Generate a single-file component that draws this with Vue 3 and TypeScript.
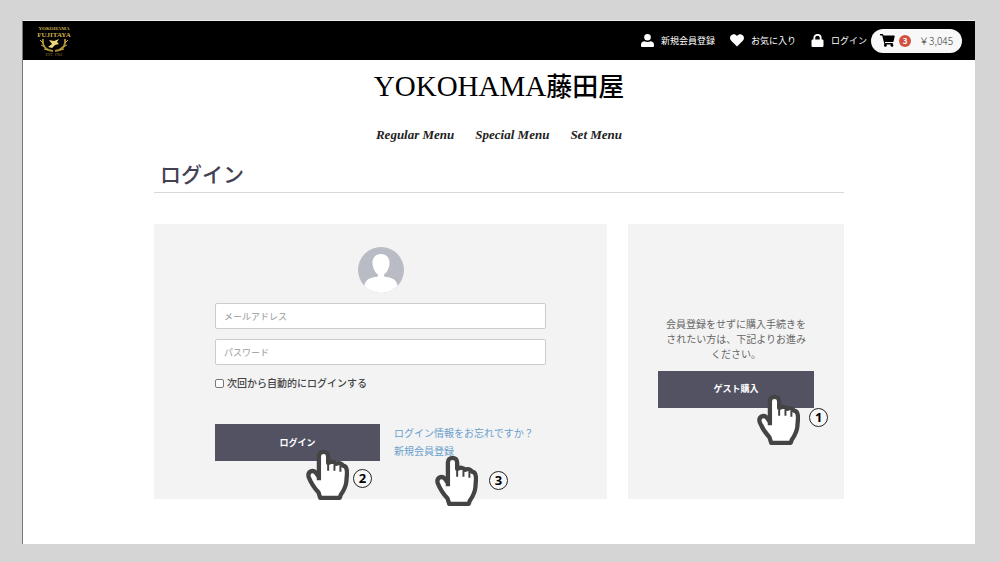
<script setup lang="ts">
import { defineComponent, h, ref } from 'vue'

const email = ref('')
const password = ref('')
const remember = ref(false)

const menus: string[] = ['Regular Menu', 'Special Menu', 'Set Menu']

const handPath =
  'M39 94V21C39 4 67 4 67 21V42C76 35 87 38 91 44C99 40 108 43 112 50C121 50 124 60 124 72L122 98C120 117 113 126 105 138L102 147H43L38 131C22 114 15 102 8 84C4 67 20 61 30 71L39 84'

const StepPointer = defineComponent({
  props: { step: { type: Number, required: true } },
  setup(props) {
    return () =>
      h('span', { class: 'pointer', 'aria-hidden': 'true' }, [
        h('svg', { viewBox: '0 0 130 156', class: 'hand' }, [
          h('path', { d: handPath, fill: '#fff', stroke: '#444', 'stroke-width': 13, 'stroke-linejoin': 'round' }),
          h('path', { d: 'M67 42V65M86 46V65M104 50V68', fill: 'none', stroke: '#444', 'stroke-width': 6 }),
        ]),
        h('span', { class: 'step' }, String(props.step)),
      ])
  },
})
</script>

<template>
  <div class="page">
    <div class="shop">
      <header class="topbar">
        <a href="#" class="logo" aria-label="YOKOHAMA FUJITAYA">
          <svg viewBox="0 0 36 34">
            <g fill="#c9ae4a" font-family="Liberation Serif, serif" text-anchor="middle">
              <text x="17" y="6" font-size="5" font-weight="bold">YOKOHAMA</text>
              <text x="17" y="13" font-size="7" font-weight="bold">FUJITAYA</text>
              <text x="17" y="32" font-size="4" fill="#8d7830">EST. 1962</text>
            </g>
            <g fill="none" stroke="#a58c34" stroke-width="2">
              <path d="M6 15C5 22 9 26 16 27" />
              <path d="M28 15C29 22 25 26 18 27" />
            </g>
            <path d="M3 16l3 3M4 21l4 2M7 25l4 1M31 16l-3 3M30 21l-4 2M27 25l-4 1" stroke="#c9ae4a" stroke-width="1" />
            <path d="M12 16l5 1 5-2-2 3 2 2-4 1-3 3-4-1 4-3z" fill="#f0d878" />
          </svg>
        </a>
        <nav class="account">
          <a href="#">
            <svg viewBox="0 0 13 13" class="icon"><circle cx="6.5" cy="3.3" r="3.3" /><path d="M0 13v-2.500C0 8.500 1.500 7.500 3.500 7.300 5 8.200 8 8.200 9.500 7.300 11.500 7.500 13 8.500 13 10.500V12q0 1-1 1H1q-1 0-1-1z" /></svg>
            新規会員登録
          </a>
          <a href="#">
            <svg viewBox="0 0 14 13" class="icon heart"><path d="M7 12.500L1.200 6.800C-.6 4.800-.2 2 1.700.9 3.500-.1 5.600.3 7 2 8.400.3 10.500-.1 12.300.9 14.200 2 14.600 4.800 12.800 6.800Z" /></svg>
            お気に入り
          </a>
          <a href="#">
            <svg viewBox="0 0 13 13" class="icon"><path d="M3.300 6V4a3.200 3.200 0 0 1 6.400 0v2" fill="none" stroke="#fff" stroke-width="1.8" /><rect x="0.5" y="5.5" width="12" height="7.5" rx="1.2" /></svg>
            ログイン
          </a>
          <button type="button" class="cart">
            <svg viewBox="0 0 15 13" class="cart-icon"><path d="M0 0h2.600q.5 0 .6.500L3.400 1.500H14q.9 0 .7.900l-1.200 5q-.1.600-.8.600H4.900l.2 1.100h7.300q.7 0 .5.700l-.1.400a1.400 1.400 0 1 1-2 .3H6.500a1.400 1.400 0 1 1-2.100-.2L2.200 1.400H.5Q0 1.400 0 1Z" /></svg>
            <span class="badge">3</span>
            <span class="price">￥3,045</span>
          </button>
        </nav>
      </header>

      <h1 class="brand">YOKOHAMA<span>藤田屋</span></h1>
      <nav class="menus">
        <a v-for="menu in menus" :key="menu" href="#">{{ menu }}</a>
      </nav>

      <main class="content">
        <h2>ログイン</h2>
        <div class="columns">
          <form class="panel login" @submit.prevent>
            <svg viewBox="0 0 46 46" class="avatar">
              <clipPath id="face"><circle cx="23" cy="23" r="23" /></clipPath>
              <g clip-path="url(#face)">
                <rect width="46" height="46" fill="#b9bcc4" />
                <path d="M23 7C28.500 7 32 11 31.500 17C31 22 28.500 26 26 27.500C26 29.500 26.500 30 29 30C36 31 39.500 34 40 41V46H6V41C6.500 34 10 31 17 30C19.500 30 20 29.500 20 27.500C17.500 26 15 22 14.500 17C14 11 17.500 7 23 7Z" fill="#fff" />
              </g>
            </svg>
            <input v-model="email" type="email" class="field" placeholder="メールアドレス" aria-label="メールアドレス" />
            <input v-model="password" type="password" class="field" placeholder="パスワード" aria-label="パスワード" />
            <label class="remember"><input v-model="remember" type="checkbox" />次回から自動的にログインする</label>
            <div class="actions">
              <div class="spot">
                <button type="submit" class="btn">ログイン</button>
                <StepPointer :step="2" class="at-login" />
              </div>
              <div class="links">
                <a href="#">ログイン情報をお忘れですか？</a>
                <div class="spot">
                  <a href="#">新規会員登録</a>
                  <StepPointer :step="3" class="at-register" />
                </div>
              </div>
            </div>
          </form>

          <section class="panel guest">
            <p>会員登録をせずに購入手続きをされたい方は、下記よりお進みください。</p>
            <div class="spot">
              <button type="button" class="btn">ゲスト購入</button>
              <StepPointer :step="1" class="at-guest" />
            </div>
          </section>
        </div>
      </main>
    </div>
  </div>
</template>

<style>
body {
  margin: 0;
  background: #d5d5d5;
}
.pointer {
  position: absolute;
  pointer-events: none;
}
.pointer .hand {
  display: block;
  width: 43px;
  height: 52px;
}
.pointer .step {
  position: absolute;
  left: 47px;
  top: 20px;
  box-sizing: border-box;
  width: 19px;
  height: 19px;
  border: 1px solid #222;
  border-radius: 50%;
  background: #f8f8f8;
  color: #000;
  font: bold 13px/17px "Open Sans", sans-serif;
  text-align: center;
}
.pointer.at-login {
  left: 91px;
  top: 25px;
}
.pointer.at-register {
  left: 41px;
  top: 13px;
}
.pointer.at-guest {
  left: 99px;
  top: 23px;
}
.pointer.at-register .step {
  left: 54px;
  top: 16px;
}
.pointer.at-guest .step {
  left: 52px;
  top: 14px;
}
</style>

<style scoped>
.page {
  box-sizing: border-box;
  display: flex;
  min-height: 100vh;
  padding: 20px 25px 18px 22px;
  font-family: "Noto Sans CJK JP", sans-serif;
  color: #525263;
}
.shop {
  flex: 1;
  background: #fff;
  border-left: 1px solid #777;
  border-top: 1px solid #eee;
}
a {
  text-decoration: none;
}
.topbar {
  display: flex;
  align-items: center;
  justify-content: space-between;
  box-sizing: border-box;
  height: 39px;
  padding: 0 13px 0 14px;
  background: #000;
}
.logo svg {
  display: block;
  width: 36px;
  height: 34px;
}
.account {
  display: flex;
  align-items: center;
  gap: 15px;
}
.account a {
  display: flex;
  align-items: center;
  gap: 7px;
  color: #fff;
  font-size: 9px;
  font-weight: 400;
  line-height: 14px;
}
.icon {
  width: 13px;
  height: 13px;
  fill: #fff;
}
.heart {
  width: 14px;
}
.cart {
  display: flex;
  align-items: center;
  height: 24px;
  margin-left: -11px;
  padding: 0 9px;
  border: 0;
  border-radius: 12px;
  background: #f8f8f8;
  color: #333;
  font: 300 10px/14px "Noto Sans CJK JP", sans-serif;
}
.cart-icon {
  width: 15px;
  height: 13px;
}
.badge {
  width: 12px;
  height: 12px;
  margin: 0 8px 0 4px;
  border-radius: 50%;
  background: #d2503f;
  color: #fff;
  font-size: 8px;
  font-weight: 700;
  line-height: 12px;
}
.brand {
  margin: 8px 0 0;
  text-align: center;
  color: #000;
  font: 400 29px/36px "Liberation Serif", "Noto Sans CJK JP", serif;
}
.brand span {
  font-size: 26px;
  font-weight: 500;
}
.menus {
  display: flex;
  justify-content: center;
  gap: 21px;
  margin-top: 20px;
}
.menus a {
  color: #222;
  font: italic bold 13px/18px "Liberation Serif", serif;
}
.content {
  width: 690px;
  max-width: 100%;
  margin: 14px auto 0;
}
h2 {
  margin: 0 0 31px;
  padding: 0 6px 3px;
  border-bottom: 1px solid #d8d8d8;
  color: #444152;
  font-size: 21px;
  font-weight: 500;
  line-height: 31px;
}
.columns {
  display: grid;
  grid-template-columns: 21fr 10fr;
  gap: 21px;
}
.panel {
  background: #f3f3f3;
}
.login {
  display: flex;
  flex-direction: column;
  padding: 23px 61px 38px;
}
.avatar {
  align-self: center;
  width: 46px;
  height: 46px;
  margin-bottom: 10px;
}
.field {
  box-sizing: border-box;
  height: 26px;
  margin: 0 0 10px;
  padding: 0 8px;
  border: 1px solid #ccc;
  border-radius: 2px;
  background: #fff;
  color: #333;
  font: 9px/16px "Noto Sans CJK JP", sans-serif;
}
.field::placeholder {
  color: #999;
}
.remember {
  display: flex;
  align-items: center;
  gap: 3px;
  color: #444;
  font-size: 10px;
  font-weight: 500;
  line-height: 16px;
}
.remember input {
  appearance: none;
  box-sizing: border-box;
  width: 9px;
  height: 9px;
  margin: 0;
  border: 1px solid #777;
  border-radius: 2px;
  background: #fff;
}
.remember input:checked {
  background: #525263;
}
.actions {
  display: grid;
  grid-template-columns: 1fr 1fr;
  column-gap: 14px;
  margin-top: 33px;
}
.actions {
  grid-template-columns: 165px 1fr;
}
.spot {
  position: relative;
}
.btn {
  display: block;
  width: 100%;
  height: 37px;
  padding: 0;
  border: 0;
  background: #525263;
  color: #fff;
  font: 700 9px/14px "Noto Sans CJK JP", sans-serif;
}
.links {
  font-size: 10px;
  line-height: 18px;
  white-space: nowrap;
}
.links a {
  display: block;
  color: #6a9fce;
}
.guest {
  display: flex;
  flex-direction: column;
  justify-content: center;
  padding: 0 30px;
}
.guest p {
  margin: 0 5px 10px;
  text-align: center;
  color: #666;
  font-size: 10px;
  line-height: 15px;
}
</style>
